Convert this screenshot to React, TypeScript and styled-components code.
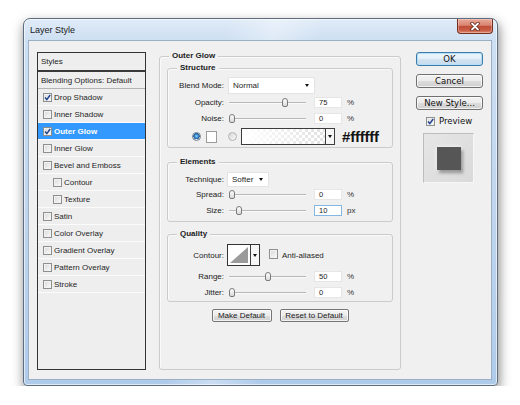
import React from "react";
import styled, { createGlobalStyle } from "styled-components";

const sans = '"Liberation Sans", Arial, sans-serif';
const tahoma = '"DejaVu Sans", Verdana, sans-serif';

const GlobalStyle = createGlobalStyle`
  * { box-sizing: border-box; }
  body {
    margin: 0;
    background: #ffffff;
    font-family: ${sans};
    color: #1e1e1e;
  }
`;

const Desktop = styled.div`
  padding: 18px 0 0 23px;
`;

const Window = styled.div`
  width: 475px;
  height: 368px;
  display: flex;
  flex-direction: column;
  padding: 0 5px 5px 4px;
  border: 1px solid #5d6c7e;
  border-radius: 7px 7px 4px 4px;
  background:
    linear-gradient(100deg, rgba(255,255,255,0) 38%, rgba(255,255,255,0.35) 47%, rgba(255,255,255,0) 56%),
    linear-gradient(180deg, #e0ebf8 0px, #cddff2 22px, #bfd5ed 55%, #afcbea 100%);
  box-shadow: inset 0 0 0 1px rgba(255,255,255,0.6), 1px 5px 12px rgba(0,0,0,0.5);
`;

const TitleBar = styled.div`
  height: 21px;
  flex: none;
  display: flex;
  justify-content: space-between;
  align-items: flex-start;
`;

const Title = styled.span`
  padding: 5px 0 0 2px;
  font: 9px/12px ${sans};
  color: #1a1a1a;
`;

const CloseButton = styled.div`
  width: 36px;
  height: 15px;
  margin-right: -1px;
  display: flex;
  align-items: center;
  justify-content: center;
  border: 1px solid #74301f;
  border-top: none;
  border-radius: 0 0 4px 4px;
  background: linear-gradient(180deg, #e9a898 0%, #d98571 45%, #c04d37 52%, #c95c45 80%, #df8a74 100%);
  box-shadow: inset 0 0 0 1px rgba(255,255,255,0.3);
`;

const Client = styled.div`
  flex: 1;
  display: grid;
  grid-template-columns: 109px 242px 69px;
  column-gap: 13px;
  align-items: start;
  padding: 11px 8px 9px 8px;
  border: 1px solid #9cafc5;
  background: #f0f0f0;
`;

/* ---- styles list ---- */

const StyleList = styled.div`
  height: 318px;
  border: 1px solid #333333;
  background: #eeeeee;
`;

const ListHeader = styled.div`
  height: 19px;
  display: flex;
  align-items: center;
  padding-left: 3px;
  border-bottom: 2px solid #3a3a3a;
  font-size: 8px;
`;

const ListItem = styled.div<{ $active?: boolean; $indent?: number; $line?: string }>`
  height: 17px;
  display: flex;
  align-items: center;
  gap: 2px;
  padding-left: ${(p) => p.$indent ?? 5}px;
  border-bottom: 1px solid ${(p) => p.$line ?? "#fbfbfb"};
  background: ${(p) => (p.$active ? "#3399ff" : "transparent")};
  color: ${(p) => (p.$active ? "#ffffff" : "#1e1e1e")};
  font-size: 8px;
  font-weight: ${(p) => (p.$active ? "bold" : "normal")};
`;

const CheckBox = styled.span<{ $h?: number }>`
  width: 9px;
  height: ${(p) => p.$h ?? 9}px;
  flex: none;
  display: inline-flex;
  align-items: center;
  justify-content: center;
  border: 1px solid #8e8f8f;
  background: linear-gradient(135deg, #d8d8d8, #fbfbfb);
  box-shadow: inset 0 0 0 1px #f2f2f2;
`;

const Check = ({ checked, h }: { checked?: boolean; h?: number }) => (
  <CheckBox $h={h}>
    {checked && (
      <svg width="7" height="7" viewBox="0 0 7 7">
        <path d="M1 3.6 L2.8 5.6 L6.2 1" stroke="#23438f" strokeWidth="1.5" fill="none" />
      </svg>
    )}
  </CheckBox>
);

const styleItems = [
  { label: "Drop Shadow", checked: true },
  { label: "Inner Shadow" },
  { label: "Outer Glow", checked: true, active: true },
  { label: "Inner Glow" },
  { label: "Bevel and Emboss" },
  { label: "Contour", nested: true },
  { label: "Texture", nested: true },
  { label: "Satin" },
  { label: "Color Overlay" },
  { label: "Gradient Overlay" },
  { label: "Pattern Overlay" },
  { label: "Stroke" },
];

/* ---- group boxes ---- */

const Group = styled.div<{ $mt?: number; $pad: string; $h?: number }>`
  position: relative;
  margin-top: ${(p) => p.$mt ?? 0}px;
  height: ${(p) => (p.$h ? `${p.$h}px` : "auto")};
  padding: ${(p) => p.$pad};
  border: 1px solid #cbcbcb;
  border-radius: 3px;
  box-shadow: inset 1px 1px 0 #fafafa;
`;

const Legend = styled.span`
  position: absolute;
  top: -6px;
  left: 9px;
  padding: 0 3px;
  background: #f0f0f0;
  font: bold 8px/10px ${sans};
  color: #222222;
`;

const Row = styled.div<{ $h: number; $mt?: number; $pl?: number }>`
  display: flex;
  align-items: center;
  height: ${(p) => p.$h}px;
  margin-top: ${(p) => p.$mt ?? 0}px;
  padding-left: ${(p) => p.$pl ?? 0}px;
  font-size: 8px;
`;

const Label = styled.span`
  width: 56px;
  flex: none;
  text-align: right;
  color: #222222;
`;

const Select = styled.div<{ $w: number; $h: number; $ml: number }>`
  width: ${(p) => p.$w}px;
  height: ${(p) => p.$h}px;
  margin-left: ${(p) => p.$ml}px;
  display: flex;
  align-items: center;
  justify-content: space-between;
  padding: 0 5px 0 4px;
  background: #ffffff;
  border: 1px solid #e4e4e4;
`;

const Caret = styled.span`
  width: 0;
  height: 0;
  border-left: 2.5px solid transparent;
  border-right: 2.5px solid transparent;
  border-top: 3px solid #111111;
`;

const Track = styled.div`
  position: relative;
  width: 77px;
  height: 9px;
  margin-left: 5px;
  &::before {
    content: "";
    position: absolute;
    left: 0;
    right: 0;
    top: 4px;
    height: 1px;
    background: #b8b8b8;
    box-shadow: 0 1px 0 #fafafa;
  }
`;

const Thumb = styled.span`
  position: absolute;
  top: 0;
  width: 6px;
  height: 9px;
  border: 1px solid #7a7a7a;
  border-radius: 3px 3px 2px 2px;
  background: linear-gradient(#ffffff, #d9d9d9);
`;

const NumBox = styled.span<{ $focus?: boolean }>`
  width: 28px;
  height: 11px;
  margin-left: 8px;
  display: flex;
  align-items: center;
  padding-left: 4px;
  background: #ffffff;
  border: 1px solid ${(p) => (p.$focus ? "#86b6e4" : "#e6e6e6")};
  font-size: 7.5px;
`;

const Unit = styled.span`
  margin-left: 5px;
  color: #333333;
`;

const SliderRow = ({
  label,
  pct,
  value,
  unit,
  mt,
  focus,
}: {
  label: string;
  pct: number;
  value: string;
  unit: string;
  mt?: number;
  focus?: boolean;
}) => (
  <Row $h={12} $mt={mt}>
    <Label>{label}</Label>
    <Track>
      <Thumb style={{ left: `${(pct / 100) * 71}px` }} />
    </Track>
    <NumBox $focus={focus}>{value}</NumBox>
    <Unit>{unit}</Unit>
  </Row>
);

const Radio = styled.span<{ $on?: boolean; $ml: number }>`
  width: 9px;
  height: 9px;
  flex: none;
  margin-left: ${(p) => p.$ml}px;
  border-radius: 50%;
  border: 1px solid ${(p) => (p.$on ? "#6f7f8f" : "#b5b5b5")};
  background: ${(p) =>
    p.$on
      ? "radial-gradient(circle at 50% 45%, #9ed8fa 0, #2f7fc6 2px, #1b5796 3px, #e6e6e6 3.3px)"
      : "linear-gradient(135deg, #d6d6d6, #f8f8f8)"};
`;

const Swatch = styled.span`
  width: 11px;
  height: 12px;
  margin-left: 5px;
  background: #ffffff;
  border: 1px solid #9c9c9c;
`;

const GradientPicker = styled.div`
  width: 94px;
  height: 17px;
  margin-left: 4px;
  display: flex;
  border: 1px solid #3c3c3c;
`;

const GradientFill = styled.span`
  flex: 1;
  background-color: #ffffff;
  background-image:
    linear-gradient(90deg, #ffffff 0%, rgba(255,255,255,0.15) 100%),
    linear-gradient(45deg, #dcdcdc 25%, transparent 25%, transparent 75%, #dcdcdc 75%),
    linear-gradient(45deg, #dcdcdc 25%, transparent 25%, transparent 75%, #dcdcdc 75%);
  background-size: 100% 100%, 6px 6px, 6px 6px;
  background-position: 0 0, 0 0, 3px 3px;
`;

const PickerArrow = styled.span`
  width: 9px;
  flex: none;
  display: flex;
  align-items: center;
  justify-content: center;
  border-left: 1px solid #3c3c3c;
  background: #f6f6f6;
`;

const HexValue = styled.span`
  margin-left: 7px;
  font: bold 15px/1 ${sans};
  letter-spacing: -0.2px;
  color: #141414;
`;

const ContourPicker = styled.div`
  width: 33px;
  height: 22px;
  margin-left: 3px;
  display: flex;
  border: 1px solid #333333;
  background: #ffffff;
`;

const ContourPreview = styled.span`
  flex: 1;
  display: flex;
  padding: 2px;
`;

const Plain = styled.span<{ $ml: number }>`
  margin-left: ${(p) => p.$ml}px;
`;

const ButtonRow = styled.div`
  margin-top: 7px;
  display: flex;
  justify-content: center;
  gap: 8px;
`;

const SmallButton = styled.button<{ $w: number }>`
  width: ${(p) => p.$w}px;
  height: 13px;
  padding: 0;
  font: 8px/11px ${sans};
  color: #1a1a1a;
  border: 1px solid #767676;
  border-radius: 2px;
  background: linear-gradient(#f4f4f4 0%, #ebebeb 50%, #dddddd 51%, #d2d2d2 100%);
  box-shadow: inset 0 0 0 1px rgba(255,255,255,0.7);
`;

/* ---- right side ---- */

const Side = styled.div`
  display: flex;
  flex-direction: column;
  padding-left: 2px;
`;

const DialogButton = styled.button<{ $default?: boolean; $mt?: number }>`
  width: 67px;
  height: 14px;
  margin-top: ${(p) => p.$mt ?? 0}px;
  padding: 0;
  font: 8.5px/12px ${tahoma};
  color: #111111;
  border: 1px solid ${(p) => (p.$default ? "#3d7bad" : "#707070")};
  border-radius: 3px;
  background: ${(p) =>
    p.$default
      ? "linear-gradient(#eef6fc 0%, #e2eef8 50%, #d2e3f1 51%, #c6dbee 100%)"
      : "linear-gradient(#f2f2f2 0%, #ebebeb 50%, #dddddd 51%, #cfcfcf 100%)"};
  box-shadow: inset 0 0 0 1px ${(p) => (p.$default ? "#b3def5" : "rgba(255,255,255,0.7)")};
`;

const PreviewToggle = styled.label`
  margin-top: 7px;
  padding-left: 10px;
  height: 9px;
  display: flex;
  align-items: center;
  gap: 4px;
  font: 8.5px/9px ${tahoma};
  color: #111111;
`;

const PreviewWell = styled.div`
  width: 51px;
  height: 50px;
  margin: 7px 0 0 7px;
  display: flex;
  align-items: center;
  justify-content: center;
  border: 1px solid;
  border-color: #bdbdbd #f7f7f7 #f7f7f7 #bdbdbd;
  background: linear-gradient(135deg, #e6e6e6, #d9d9d9);
`;

const PreviewSquare = styled.span`
  width: 24px;
  height: 23px;
  background: #565656;
  box-shadow: 2px 3px 3px rgba(0, 0, 0, 0.35), 0 0 4px rgba(255, 255, 255, 0.9);
`;

export default function App() {
  return (
    <>
      <GlobalStyle />
      <Desktop>
        <Window>
          <TitleBar>
            <Title>Layer Style</Title>
            <CloseButton>
              <svg width="10" height="9" viewBox="0 0 10 9">
                <path d="M2 1.5 L8 7.5 M8 1.5 L2 7.5" stroke="#5c2116" strokeWidth="3.4" strokeLinecap="round" />
                <path d="M2 1.5 L8 7.5 M8 1.5 L2 7.5" stroke="#ffffff" strokeWidth="1.8" strokeLinecap="round" />
              </svg>
            </CloseButton>
          </TitleBar>

          <Client>
            <StyleList>
              <ListHeader>Styles</ListHeader>
              <ListItem $indent={3} $line="#b4b4b4">
                Blending Options: Default
              </ListItem>
              {styleItems.map((item) => (
                <ListItem key={item.label} $active={item.active} $indent={item.nested ? 15 : 5}>
                  <Check checked={item.checked} />
                  {item.label}
                </ListItem>
              ))}
            </StyleList>

            <Group $mt={4} $h={314} $pad="11px 7px 0 7px">
              <Legend>Outer Glow</Legend>

              <Group $pad="8px 0 2px 0">
                <Legend>Structure</Legend>
                <Row $h={17}>
                  <Label>Blend Mode:</Label>
                  <Select $w={87} $h={17} $ml={4}>
                    Normal
                    <Caret />
                  </Select>
                </Row>
                <SliderRow label="Opacity:" pct={75} value="75" unit="%" mt={2} />
                <SliderRow label="Noise:" pct={0} value="0" unit="%" mt={4} />
                <Row $h={17} $mt={4}>
                  <Radio $on $ml={24} />
                  <Swatch />
                  <Radio $ml={11} />
                  <GradientPicker>
                    <GradientFill />
                    <PickerArrow>
                      <Caret />
                    </PickerArrow>
                  </GradientPicker>
                  <HexValue>#ffffff</HexValue>
                </Row>
              </Group>

              <Group $mt={14} $pad="9px 0 5px 0">
                <Legend>Elements</Legend>
                <Row $h={15}>
                  <Label>Technique:</Label>
                  <Select $w={42} $h={15} $ml={3}>
                    Softer
                    <Caret />
                  </Select>
                </Row>
                <SliderRow label="Spread:" pct={0} value="0" unit="%" mt={1} />
                <SliderRow label="Size:" pct={10} value="10" unit="px" mt={4} focus />
              </Group>

              <Group $mt={12} $pad="9px 0 3px 0">
                <Legend>Quality</Legend>
                <Row $h={22}>
                  <Label>Contour:</Label>
                  <ContourPicker>
                    <ContourPreview>
                      <svg width="100%" height="100%" viewBox="0 0 20 16" preserveAspectRatio="none">
                        <polygon points="0,16 20,0 20,16" fill="#9a9a9a" />
                      </svg>
                    </ContourPreview>
                    <PickerArrow>
                      <Caret />
                    </PickerArrow>
                  </ContourPicker>
                  <Plain $ml={9}>
                    <Check h={10} />
                  </Plain>
                  <Plain $ml={4}>Anti-aliased</Plain>
                </Row>
                <SliderRow label="Range:" pct={50} value="50" unit="%" mt={4} />
                <SliderRow label="Jitter:" pct={0} value="0" unit="%" mt={4} />
              </Group>

              <ButtonRow>
                <SmallButton $w={60}>Make Default</SmallButton>
                <SmallButton $w={69}>Reset to Default</SmallButton>
              </ButtonRow>
            </Group>

            <Side>
              <DialogButton $default>OK</DialogButton>
              <DialogButton $mt={8}>Cancel</DialogButton>
              <DialogButton $mt={8}>New Style...</DialogButton>
              <PreviewToggle>
                <Check checked />
                Preview
              </PreviewToggle>
              <PreviewWell>
                <PreviewSquare />
              </PreviewWell>
            </Side>
          </Client>
        </Window>
      </Desktop>
    </>
  );
}
